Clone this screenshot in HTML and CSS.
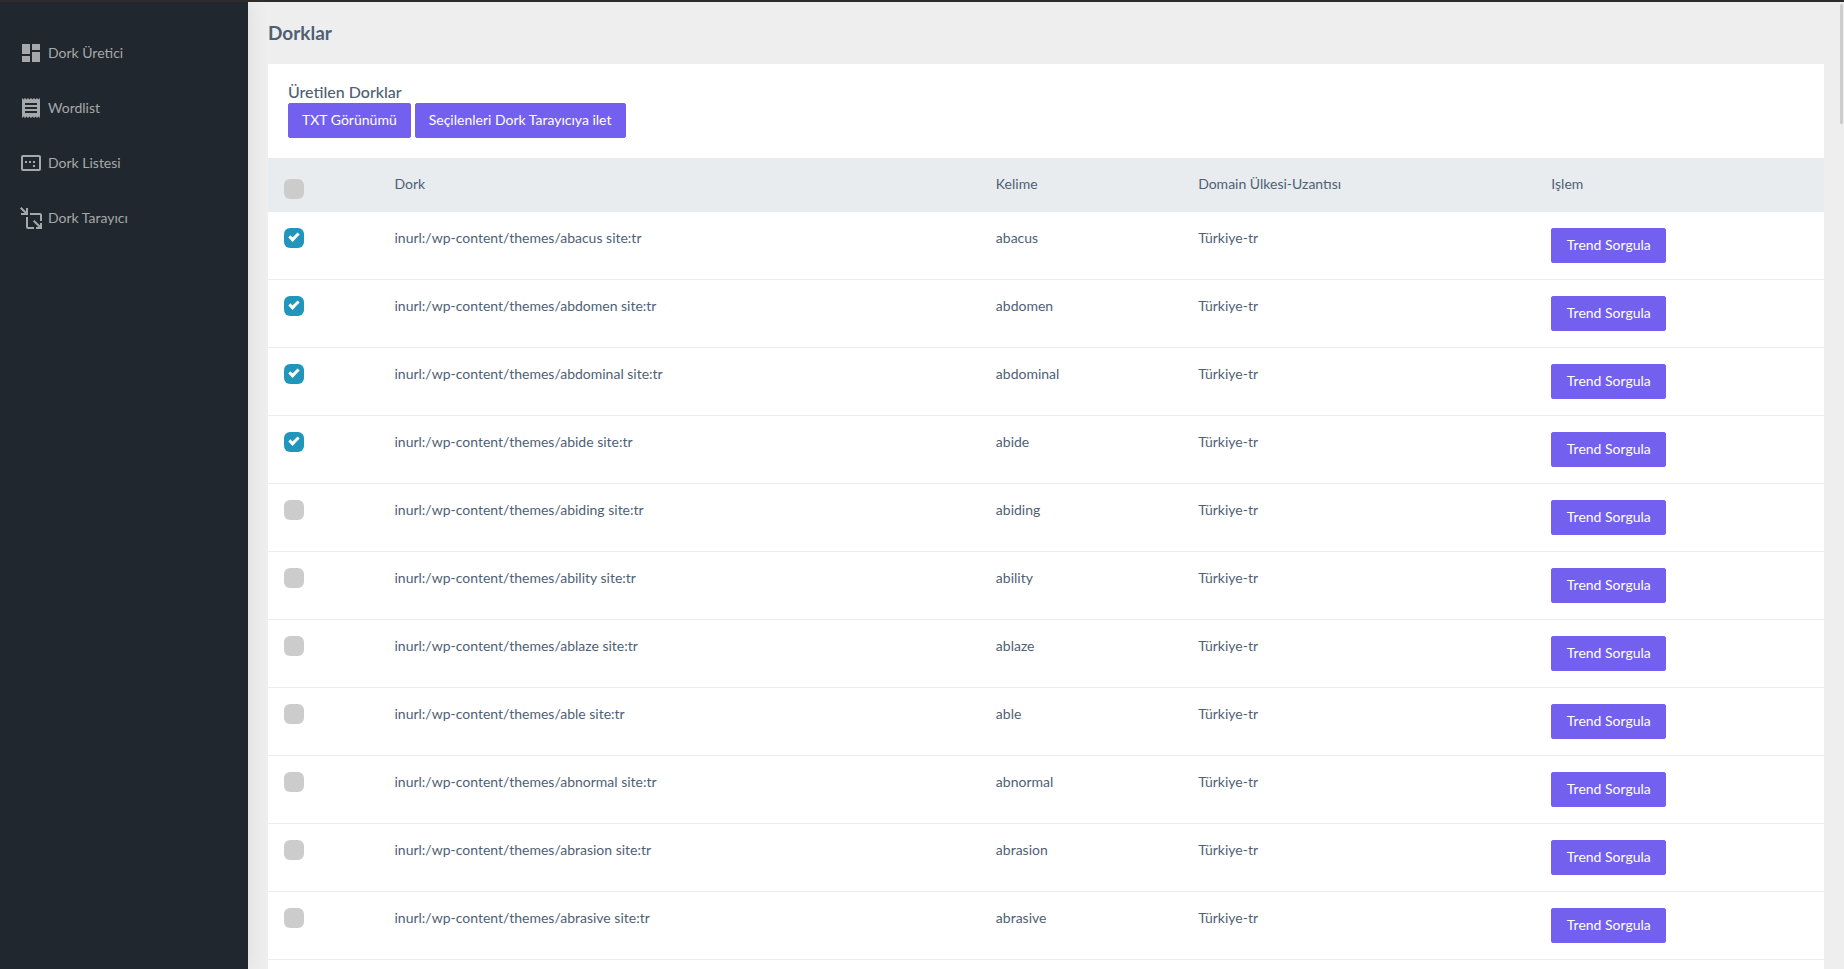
FILE: index.html
```html
<!DOCTYPE html>
<html lang="tr">
<head>
<meta charset="utf-8">
<meta name="viewport" content="width=device-width, initial-scale=1">
<title>Dorklar</title>
<link rel="stylesheet" href="styles.css">
</head>
<body>
<div class="layout">
  <nav class="sidebar" aria-label="Menü">
    <a class="nav-link" href="#"><svg class="nav-icon" viewBox="0 0 24 24" aria-hidden="true"><path d="M13 3v6h8V3M13 21h8V11h-8M3 21h8v-6H3M3 13h8V3H3z"/></svg>Dork Üretici</a>
    <a class="nav-link" href="#"><svg class="nav-icon" viewBox="0 0 24 24" aria-hidden="true"><path d="M3 22l1.500-1.500L6 22l1.500-1.500L9 22l1.500-1.500L12 22l1.500-1.500L15 22l1.500-1.500L18 22l1.500-1.500L21 22V2l-1.500 1.500L18 2l-1.500 1.500L15 2l-1.500 1.500L12 2l-1.500 1.500L9 2 7.500 3.500 6 2 4.500 3.500 3 2zM18 9H6V7h12zm0 4H6v-2h12zm0 4H6v-2h12z"/></svg>Wordlist</a>
    <a class="nav-link" href="#"><svg class="nav-icon" viewBox="0 0 24 24" aria-hidden="true"><path fill-rule="evenodd" d="M4 4h16a2 2 0 0 1 2 2v12a2 2 0 0 1-2 2H4a2 2 0 0 1-2-2V6a2 2 0 0 1 2-2zm0 2v12h16V6zM6 10h2v2H6zm4 0h2v2h-2zm4 0h2v2h-2zm0 4h2v2h-2z"/></svg>Dork Listesi</a>
    <a class="nav-link" href="#"><svg class="nav-icon" viewBox="0 0 24 24" aria-hidden="true"><path d="M1 2.400L2.400 1 7 5.600V2h2v7H2V7h3.600zM11 7h10a2 2 0 0 1 2 2v6h-2V9H11zM7 11h2v10h6v2H9a2 2 0 0 1-2-2zM14 15.400l1.400-1.400 5.600 5.600V17h2v6h-6v-2h2.600z"/></svg>Dork Tarayıcı</a>
  </nav>
  <main class="content">
    <h1 class="page-title">Dorklar</h1>
    <section class="card">
      <div class="card-head">
        <h2 class="card-title">Üretilen Dorklar</h2>
        <div class="actions">
          <button class="btn" type="button">TXT Görünümü</button>
          <button class="btn" type="button">Seçilenleri Dork Tarayıcıya ilet</button>
        </div>
      </div>
      <table class="table">
        <colgroup><col class="col-check"><col class="col-dork"><col class="col-word"><col class="col-domain"><col class="col-action"></colgroup>
        <thead>
          <tr><th scope="col"><input class="check" type="checkbox" aria-label="Tümünü seç"></th><th scope="col">Dork</th><th scope="col">Kelime</th><th scope="col">Domain Ülkesi-Uzantısı</th><th scope="col">Işlem</th></tr>
        </thead>
        <tbody>
          <tr><td><input class="check" type="checkbox" aria-label="abacus" checked></td><td>inurl:/wp-content/themes/abacus site:tr</td><td>abacus</td><td>Türkiye-tr</td><td><button class="btn" type="button">Trend Sorgula</button></td></tr>
          <tr><td><input class="check" type="checkbox" aria-label="abdomen" checked></td><td>inurl:/wp-content/themes/abdomen site:tr</td><td>abdomen</td><td>Türkiye-tr</td><td><button class="btn" type="button">Trend Sorgula</button></td></tr>
          <tr><td><input class="check" type="checkbox" aria-label="abdominal" checked></td><td>inurl:/wp-content/themes/abdominal site:tr</td><td>abdominal</td><td>Türkiye-tr</td><td><button class="btn" type="button">Trend Sorgula</button></td></tr>
          <tr><td><input class="check" type="checkbox" aria-label="abide" checked></td><td>inurl:/wp-content/themes/abide site:tr</td><td>abide</td><td>Türkiye-tr</td><td><button class="btn" type="button">Trend Sorgula</button></td></tr>
          <tr><td><input class="check" type="checkbox" aria-label="abiding"></td><td>inurl:/wp-content/themes/abiding site:tr</td><td>abiding</td><td>Türkiye-tr</td><td><button class="btn" type="button">Trend Sorgula</button></td></tr>
          <tr><td><input class="check" type="checkbox" aria-label="ability"></td><td>inurl:/wp-content/themes/ability site:tr</td><td>ability</td><td>Türkiye-tr</td><td><button class="btn" type="button">Trend Sorgula</button></td></tr>
          <tr><td><input class="check" type="checkbox" aria-label="ablaze"></td><td>inurl:/wp-content/themes/ablaze site:tr</td><td>ablaze</td><td>Türkiye-tr</td><td><button class="btn" type="button">Trend Sorgula</button></td></tr>
          <tr><td><input class="check" type="checkbox" aria-label="able"></td><td>inurl:/wp-content/themes/able site:tr</td><td>able</td><td>Türkiye-tr</td><td><button class="btn" type="button">Trend Sorgula</button></td></tr>
          <tr><td><input class="check" type="checkbox" aria-label="abnormal"></td><td>inurl:/wp-content/themes/abnormal site:tr</td><td>abnormal</td><td>Türkiye-tr</td><td><button class="btn" type="button">Trend Sorgula</button></td></tr>
          <tr><td><input class="check" type="checkbox" aria-label="abrasion"></td><td>inurl:/wp-content/themes/abrasion site:tr</td><td>abrasion</td><td>Türkiye-tr</td><td><button class="btn" type="button">Trend Sorgula</button></td></tr>
          <tr><td><input class="check" type="checkbox" aria-label="abrasive"></td><td>inurl:/wp-content/themes/abrasive site:tr</td><td>abrasive</td><td>Türkiye-tr</td><td><button class="btn" type="button">Trend Sorgula</button></td></tr>
        </tbody>
      </table>
    </section>
    <div class="scroll-thumb"></div>
  </main>
</div>
</body>
</html>
```
FILE: styles.css
```css
*,
*::before { box-sizing: border-box; }

body {
  margin: 0;
  font-family: Lato, "Noto Sans", sans-serif;
  font-size: 14px;
  line-height: 19px;
  color: #4f5f75;
  background: #eeeeee;
}

.layout {
  display: flex;
  height: 100vh;
  overflow: hidden;
  border-top: 2px solid #2e2c2b;
}

.sidebar {
  flex: 0 0 248px;
  padding-top: 23px;
  background: #20272e;
  box-shadow: 1px 0 20px rgba(0, 0, 0, 0.08);
  z-index: 1;
}

.nav-link {
  display: flex;
  align-items: center;
  gap: 5px;
  height: 55px;
  padding: 0 19px;
  color: #a6a9ab;
  text-decoration: none;
}

.nav-icon {
  width: 24px;
  height: 24px;
  fill: currentColor;
}

.content {
  position: relative;
  flex: 1;
  min-width: 0;
  display: flex;
  flex-direction: column;
  padding: 20px 20px 0;
}

.page-title {
  margin: 0 0 20px;
  font-size: 19px;
  line-height: 22px;
  font-weight: 700;
}

.card {
  flex: 1 0 auto;
  background: #ffffff;
}

.card-head { padding: 18px 20px 20px; }

.card-title {
  margin: 0 0 2px;
  font-size: 16px;
  line-height: 19px;
  font-weight: 500;
}

.actions {
  display: flex;
  gap: 4px;
}

.btn {
  display: block;
  height: 35px;
  padding: 0 13px 2px;
  border: 1px solid #7460ee;
  border-radius: 2px;
  background: #7460ee;
  color: #ffffff;
  font: inherit;
  white-space: nowrap;
}

.table {
  width: 100%;
  table-layout: fixed;
  border-collapse: separate;
  border-spacing: 0;
}

.table .btn { min-width: 115px; }

.col-check { width: 7.1%; }
.col-dork { width: 38.65%; }
.col-word { width: 13%; }
.col-domain { width: 22.7%; }

.table th,
.table td {
  padding: 16px;
  text-align: left;
  vertical-align: top;
}

.table th {
  height: 54px;
  padding-bottom: 12px;
  background: #e8ecef;
  font-weight: 400;
}

.table td { border-bottom: 1px solid #e9ebed; }

.check {
  appearance: none;
  position: relative;
  display: block;
  width: 20px;
  height: 20px;
  margin: 0;
  border-radius: 6px;
  background: #cccccc;
}

.table th .check { margin-top: 5px; }

.check:checked { background: #2196bd; }

.check:checked::before {
  content: "";
  position: absolute;
  left: 7px;
  top: 3px;
  width: 6px;
  height: 10px;
  border: solid #ffffff;
  border-width: 0 3px 3px 0;
  transform: rotate(45deg);
}

.scroll-thumb {
  position: absolute;
  top: 2px;
  right: 1px;
  width: 3px;
  height: 120px;
  border-radius: 2px;
  background: #cccccc;
}
```
